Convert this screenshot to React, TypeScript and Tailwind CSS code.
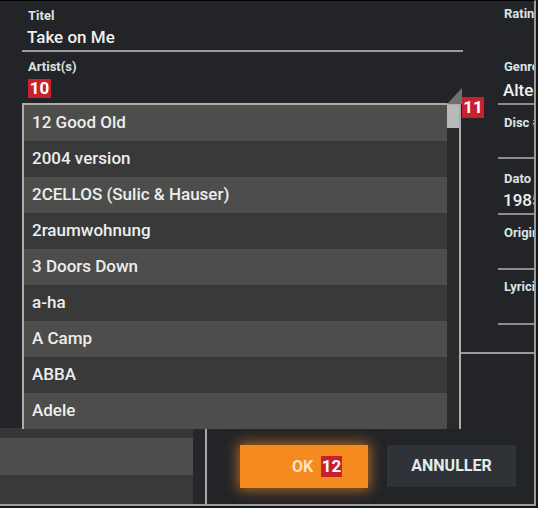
import React from 'react'

const ARTISTS = [
  '12 Good Old',
  '2004 version',
  '2CELLOS (Sulic & Hauser)',
  '2raumwohnung',
  '3 Doors Down',
  'a-ha',
  'A Camp',
  'ABBA',
  'Adele',
]

// small red callout number used in the magazine screenshot
function Badge({ n, className = '' }: { n: string; className?: string }) {
  return (
    <span className={`flex items-center justify-center bg-[#c8202f] text-white font-bold text-[17px] leading-none ${className}`}>
      {n}
    </span>
  )
}

const label = 'pl-[6px] h-[16px] text-[13px] leading-[16px] font-bold text-[#dbe3e3] whitespace-nowrap'
const value = 'pl-[5px] h-[20px] text-[17px] leading-[20px] font-medium text-[#f0f0f0] whitespace-nowrap'
const rule = 'border-t-2 border-[#8e8e8e]'

export default function App() {
  return (
    <div className="w-[538px] h-[508px] bg-[#151515]">
      <div className="relative w-[536px] h-[506px] flex flex-col overflow-hidden bg-[#232428] border-t border-t-black border-r-2 border-b-2 border-r-[#9c9c9c] border-b-[#9c9c9c] font-['Roboto','Liberation_Sans',sans-serif]">
        {/* top: form fields */}
        <div className="flex h-[427px]">
          <div className="w-[461px] shrink-0 pl-[22px] flex flex-col">
            <span className={`${label} mt-[7px]`}>Titel</span>
            <span className={`${value} mt-[3px]`}>Take on Me</span>
            <div className="mt-[3px] w-[441px] border-t-2 border-[#9a9a9a]" />
            <span className={`${label} mt-[7px]`}>Artist(s)</span>
            <Badge n="10" className="ml-[6px] mt-[4px] w-[23px] h-[19px]" />
          </div>

          <div className="flex-1 flex flex-col min-w-0">
            <div className="pl-[37px] flex flex-col">
              <span className={`${label} mt-[5px]`}>Rating</span>
              <span className={`${label} mt-[37px]`}>Genre</span>
              <span className={`${value} mt-[5px]`}>Alternative</span>
              <div className={`${rule} mt-[3px]`} />
              <span className={`${label} mt-[10px]`}>Disc #</span>
              <div className={`${rule} mt-[26px]`} />
              <span className={`${label} mt-[12px]`}>Dato</span>
              <span className={`${value} mt-[3px]`}>1985</span>
              <div className={`${rule} mt-[3px]`} />
              <span className={`${label} mt-[10px]`}>Original</span>
              <div className={`${rule} mt-[27px]`} />
              <span className={`${label} mt-[9px]`}>Lyricist</span>
              <div className={`${rule} mt-[28px]`} />
            </div>
            <div className="mt-[27px] border-t-2 border-[#9a9a9a]" />
          </div>
        </div>

        {/* bottom: list behind + buttons */}
        <div className="flex flex-1">
          <div className="w-[207px] shrink-0 flex border-r-2 border-[#a8a8a8]">
            <div className="flex-1 flex flex-col">
              <div className="h-[10px] bg-[#363636]" />
              <div className="h-[37px] bg-[#4d4d4b]" />
              <div className="flex-1 bg-[#393939]" />
            </div>
            <div className="w-[12px] bg-[#26272a]" />
          </div>
          <div className="flex-1 flex items-start gap-[19px] pl-[33px] pt-[17px]">
            <button className="w-[128px] h-[43px] flex items-center justify-center gap-[8px] pl-[26px] bg-[#f58a1e] shadow-[0_0_12px_2px_rgba(245,138,30,0.65)]">
              <span className="text-[16px] font-bold text-[#fde3c6]">OK</span>
              <Badge n="12" className="w-[21px] h-[21px]" />
            </button>
            <button className="w-[129px] h-[42px] bg-[#2f3236] text-[16px] font-bold text-[#e2eaea]">ANNULLER</button>
          </div>
        </div>

        {/* open artist dropdown */}
        <div className="absolute left-[22px] top-[102px] w-[439px] h-[326px] flex border-l-2 border-t-2 border-r-2 border-[#acacac]">
          <ul className="flex-1 flex flex-col">
            {ARTISTS.map((a, i) => (
              <li
                key={a}
                className={`h-[36px] shrink-0 flex items-center pl-[8px] text-[17px] font-medium text-[#eceeee] ${i % 2 === 0 ? 'bg-[#4d4d4b]' : 'bg-[#393939]'}`}
              >
                {a}
              </li>
            ))}
          </ul>
          <div className="w-[12px] bg-[#2a2a2b]">
            <div className="h-[23px] bg-[#b8baba]" />
          </div>
        </div>
        <svg className="absolute left-[447px] top-[87px]" width="15" height="16" viewBox="0 0 15 16">
          <polygon points="0,16 15,0 15,16" fill="#6f6f6f" />
        </svg>
        <Badge n="11" className="absolute left-[462px] top-[96px] w-[22px] h-[21px]" />
      </div>
    </div>
  )
}
